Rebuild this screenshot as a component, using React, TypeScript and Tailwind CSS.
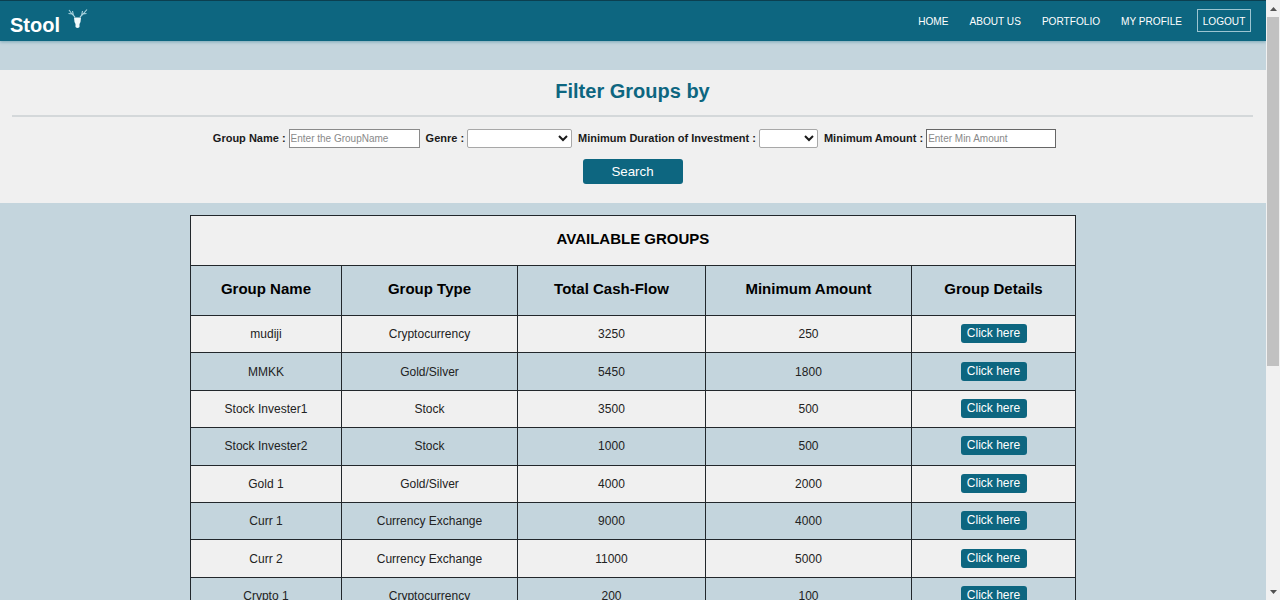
const rows = [
  ["mudiji", "Cryptocurrency", "3250", "250"],
  ["MMKK", "Gold/Silver", "5450", "1800"],
  ["Stock Invester1", "Stock", "3500", "500"],
  ["Stock Invester2", "Stock", "1000", "500"],
  ["Gold 1", "Gold/Silver", "4000", "2000"],
  ["Curr 1", "Currency Exchange", "9000", "4000"],
  ["Curr 2", "Currency Exchange", "11000", "5000"],
  ["Crypto 1", "Cryptocurrency", "200", "100"],
];

function Deer() {
  return (
    <svg width="20" height="22" viewBox="0 0 20 22" fill="none" className="ml-[8px] mt-[-3px]">
      <path d="M7 8 L4 5 L1 1 M4 5 L0.5 4.5 M5.5 6.5 L4.5 2 M12 8 L15 5 L19 0.5 M15 5 L18.5 4.5 M13.5 6.5 L14.5 2" stroke="#a9d3de" strokeWidth="1.1" />
      <path d="M6 8.5 L13 8.5 L12.5 13 L11.5 15 L11.5 18 Q9.5 20 7.5 18 L7.5 15 L6.5 13 Z" fill="#f2fafb" />
    </svg>
  );
}

export default function App() {
  return (
    <div className="h-[600px] overflow-hidden flex bg-[#c4d5dd] font-['Liberation_Sans',Arial,sans-serif] text-[#222222]">
      <div className="w-[1266px] shrink-0">
        <nav className="h-[41px] bg-[#0d6680] border-t border-[#0b3f50] flex items-center justify-between pl-[10px] pr-[15px] shadow-[0_1px_3px_rgba(13,102,128,0.4)]">
          <div className="flex items-center">
            <span className="text-[20px] font-bold text-white leading-none mt-[7px]">Stool</span>
            <Deer />
          </div>
          <div className="flex items-center text-[10.1px] text-white">
            <a className="mr-[21px] mt-[2px]">HOME</a>
            <a className="mr-[21px] mt-[2px]">ABOUT US</a>
            <a className="mr-[21px] mt-[2px]">PORTFOLIO</a>
            <a className="mr-[15px] mt-[2px]">MY PROFILE</a>
            <a className="border border-[#9cc5d1] h-[23px] w-[54px] mt-[-1px] pt-[2px] flex items-center justify-center">LOGOUT</a>
          </div>
        </nav>
        <section className="mt-[29px] h-[133px] bg-[#f0f0f0] pl-[12px] pr-[13px] pt-[10px]">
          <h2 className="text-[20px] font-bold text-[#0d6680] text-center leading-[23px]">Filter Groups by</h2>
          <hr className="mt-[12px] border-t-2 border-[#d4d8da]" />
          <div className="mt-[11px] pl-[4px] flex justify-center items-center text-[11px] font-bold h-[20px] text-[#1a1a1a]">
            <label className="mr-[3px]">Group Name :</label>
            <input
              placeholder="Enter the GroupName"
              className="w-[131px] h-[19px] bg-white border border-[#8a8a8a] px-[1px] text-[10px] font-normal placeholder:text-[#8a8a8a] mr-[6px]"
            />
            <label className="mr-[3px]">Genre :</label>
            <select className="w-[105px] h-[19px] bg-white border border-[#a8a8a8] rounded-[2px] mr-[6px] appearance-auto"></select>
            <label className="mr-[3px]">Minimum Duration of Investment :</label>
            <select className="w-[59px] h-[19px] bg-white border border-[#a8a8a8] rounded-[2px] mr-[6px] appearance-auto"></select>
            <label className="mr-[3px]">Minimum Amount :</label>
            <input
              placeholder="Enter Min Amount"
              className="w-[130px] h-[19px] bg-white border border-[#666666] px-[1px] text-[10px] font-normal placeholder:text-[#8a8a8a]"
            />
          </div>
          <div className="mt-[11px] flex justify-center">
            <button className="w-[100px] h-[25px] bg-[#0d6680] rounded-[3px] text-white text-[13.33px]">Search</button>
          </div>
        </section>
        <table className="mt-[12px] mx-auto w-[885px] table-fixed border-collapse">
          <colgroup>
            <col className="w-[151px]" />
            <col className="w-[176px]" />
            <col className="w-[188px]" />
            <col className="w-[206px]" />
            <col className="w-[164px]" />
          </colgroup>
          <thead>
            <tr className="h-[50px] bg-[#f0f0f0]">
              <th colSpan={5} className="border border-[#22272b] text-[15px] font-bold text-black pb-[2px]">AVAILABLE GROUPS</th>
            </tr>
            <tr className="h-[50px]">
              {["Group Name", "Group Type", "Total Cash-Flow", "Minimum Amount", "Group Details"].map((h) => (
                <th key={h} className="border border-[#22272b] text-[15px] font-bold text-black pb-[2px]">{h}</th>
              ))}
            </tr>
          </thead>
          <tbody>
            {rows.map((r, i) => (
              <tr key={r[0]} className={`h-[37.4px] ${i % 2 === 0 ? "bg-[#f0f0f0]" : ""}`}>
                {r.map((c, j) => (
                  <td key={j} className="border border-[#22272b] text-center text-[12px]">{c}</td>
                ))}
                <td className="border border-[#22272b]">
                  <div className="flex justify-center pl-[2px] pb-[1px]">
                    <button className="w-[66px] h-[19px] pr-[2px] bg-[#0d6680] rounded-[3px] text-white text-[12px] leading-[19px]">Click here</button>
                  </div>
                </td>
              </tr>
            ))}
          </tbody>
        </table>
      </div>
      <div className="w-[14px] shrink-0 h-[600px] bg-[#f1f1f1] flex flex-col items-center">
        <div className="h-[17px] flex items-center text-[#555555]">
          <svg width="7" height="4" viewBox="0 0 7 4"><path d="M3.5 0 L7 4 L0 4 Z" fill="currentColor" /></svg>
        </div>
        <div className="self-stretch ml-[1px] mr-[1px] h-[349px] bg-[#c1c1c1]" />
        <div className="mt-auto h-[17px] flex items-center text-[#505050]">
          <svg width="7" height="4" viewBox="0 0 7 4"><path d="M0 0 L7 0 L3.5 4 Z" fill="currentColor" /></svg>
        </div>
      </div>
    </div>
  );
}
